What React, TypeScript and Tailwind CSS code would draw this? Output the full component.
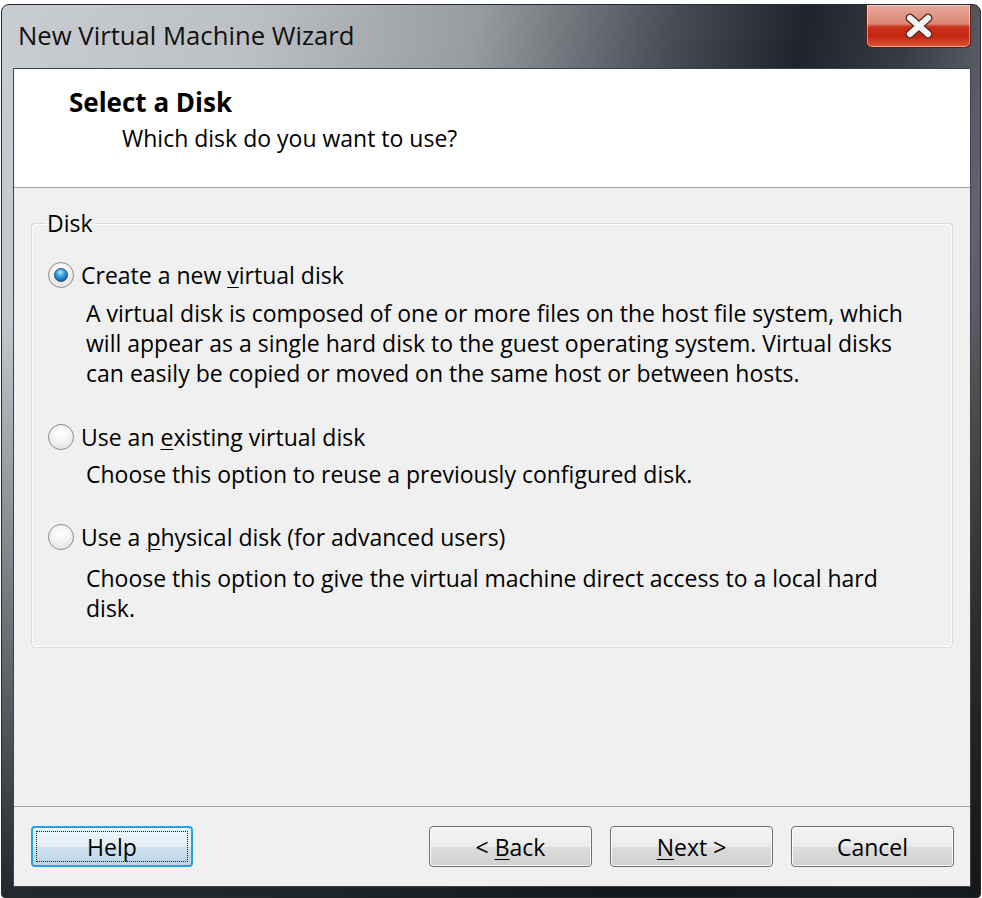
import * as React from "react";

// Windows 7 style wizard dialog

const Mn = ({ children }: { children: React.ReactNode }) => (
  <span className="underline underline-offset-[3px] decoration-1">{children}</span>
);

const Radio = ({ checked = false }: { checked?: boolean }) => (
  <span className="w-[26px] h-[26px] shrink-0 rounded-full border border-[#8a8c8e] bg-[radial-gradient(circle_at_50%_35%,#ffffff_0%,#f4f4f4_45%,#d4d6d8_100%)] flex items-center justify-center shadow-[inset_0_0_0_1px_#f0f0f0]">
    {checked && (
      <span className="w-[14px] h-[14px] rounded-full border border-[#1b4f80] bg-[radial-gradient(circle_at_45%_30%,#bdeafc_0%,#38a8e4_35%,#0d5ea8_80%,#0a3f7a_100%)]" />
    )}
  </span>
);

const WinButton = ({
  children,
  focused = false,
}: {
  children: React.ReactNode;
  focused?: boolean;
}) => (
  <button
    className={
      focused
        ? "h-[41px] w-[162px] rounded-[4px] border-2 border-[#23a6df] bg-[linear-gradient(to_bottom,#eef5fa_0%,#e2edf5_50%,#cfe2ee_51%,#bcd6e8_100%)] p-[3px] text-[23px] leading-[30px] text-black"
        : "h-[41px] w-[163px] rounded-[4px] border border-[#707070] bg-[linear-gradient(to_bottom,#f3f3f3_0%,#ebebeb_50%,#dddddd_51%,#d0d0d0_100%)] shadow-[inset_0_0_0_1px_#fbfbfb] text-[23px] leading-[30px] text-black"
    }
  >
    {focused ? (
      <span className="w-full h-full flex items-center justify-center border border-dotted border-[#222]">
        {children}
      </span>
    ) : (
      children
    )}
  </button>
);

const CloseGlyph = () => (
  <svg width="34" height="26" viewBox="0 0 34 26">
    <path
      d="M8 5 L26 21 M26 5 L8 21"
      stroke="#5a2a22"
      strokeWidth="9"
      strokeLinecap="round"
      fill="none"
    />
    <path
      d="M8 5 L26 21 M26 5 L8 21"
      stroke="#f4f4f4"
      strokeWidth="6"
      strokeLinecap="round"
      fill="none"
    />
  </svg>
);

export default function App() {
  return (
    <div
      className="w-[982px] h-[898px] bg-white pt-[4px] pl-[1px] overflow-hidden"
      style={{ fontFamily: '"Open Sans", "Noto Sans", sans-serif' }}
    >
      <div className="w-[980px] h-[894px] rounded-t-[8px] rounded-b-[4px] border border-[#25292d] bg-[linear-gradient(to_bottom,rgba(0,0,0,0)_0%,rgba(0,0,0,0)_35%,rgba(18,21,25,0.9)_100%),linear-gradient(100deg,#c9cdd1_0%,#bcc0c4_22%,#979ca1_42%,#454b51_60%,#1f242a_71%,#363c42_80%,#5f656a_89%,#2b3035_100%)] flex flex-col">
        {/* Title bar */}
        <div className="h-[63px] flex items-start shrink-0">
          <div className="flex-1 self-center pl-[16px] pb-[2px] text-[25.7px] text-[#111] leading-[30px]">
            New Virtual Machine Wizard
          </div>
          <div className="mr-[9px] w-[105px] h-[43px] rounded-b-[6px] border border-t-0 border-[#5a2219] bg-[linear-gradient(to_bottom,#e8aa9c_0%,#dc8675_45%,#c8321c_52%,#c4260f_75%,#dc5a38_100%)] shadow-[inset_0_0_0_1px_rgba(255,255,255,0.45)] flex items-center justify-center">
            <CloseGlyph />
          </div>
        </div>

        {/* Client area */}
        <div className="flex-1 ml-[11px] mr-[9px] mb-[10px] border border-[#3d4247] bg-[#f0f0f0] flex flex-col text-black text-[23px]">
          {/* Header */}
          <div className="h-[119px] shrink-0 bg-white border-b border-[#a0a0a0] pl-[55px] pt-[18px]">
            <div className="font-bold text-[26px] leading-[30px]">Select a Disk</div>
            <div className="mt-[6px] pl-[53px] leading-[30px]">
              Which disk do you want to use?
            </div>
          </div>

          {/* Body */}
          <div className="flex-1 px-[17px] pt-[20px]">
            <fieldset className="border border-[#d3dde4] rounded-[4px] shadow-[inset_0_0_0_1px_#fbfcfd]">
              <legend className="ml-[13px] px-[2px] leading-[30px]">Disk</legend>

              <div className="pl-[16px] pr-[10px] pb-[24px]">
                <div className="mt-[22px] flex items-center gap-[7px] leading-[30px]">
                  <Radio checked />
                  <span>
                    Create a new <Mn>v</Mn>irtual disk
                  </span>
                </div>
                <div className="mt-[8px] pl-[38px] leading-[30px]">
                  A virtual disk is composed of one or more files on the host file system, which
                  <br />
                  will appear as a single hard disk to the guest operating system. Virtual disks
                  <br />
                  can easily be copied or moved on the same host or between hosts.
                </div>

                <div className="mt-[34px] flex items-center gap-[7px] leading-[30px]">
                  <Radio />
                  <span>
                    Use an <Mn>e</Mn>xisting virtual disk
                  </span>
                </div>
                <div className="mt-[7px] pl-[38px] leading-[30px]">
                  Choose this option to reuse a previously configured disk.
                </div>

                <div className="mt-[33px] flex items-center gap-[7px] leading-[30px]">
                  <Radio />
                  <span>
                    Use a <Mn>p</Mn>hysical disk (for advanced users)
                  </span>
                </div>
                <div className="mt-[11px] pl-[38px] leading-[30px]">
                  Choose this option to give the virtual machine direct access to a local hard
                  <br />
                  disk.
                </div>
              </div>
            </fieldset>
          </div>

          {/* Footer */}
          <div className="h-[80px] shrink-0 border-t border-[#a3a3a3] flex items-start pt-[19px] pl-[17px] pr-[16px]">
            <WinButton focused>Help</WinButton>
            <div className="flex-1" />
            <div className="flex gap-[18px]">
              <WinButton>
                &lt; <Mn>B</Mn>ack
              </WinButton>
              <WinButton>
                <Mn>N</Mn>ext &gt;
              </WinButton>
              <WinButton>Cancel</WinButton>
            </div>
          </div>
        </div>
      </div>
    </div>
  );
}
